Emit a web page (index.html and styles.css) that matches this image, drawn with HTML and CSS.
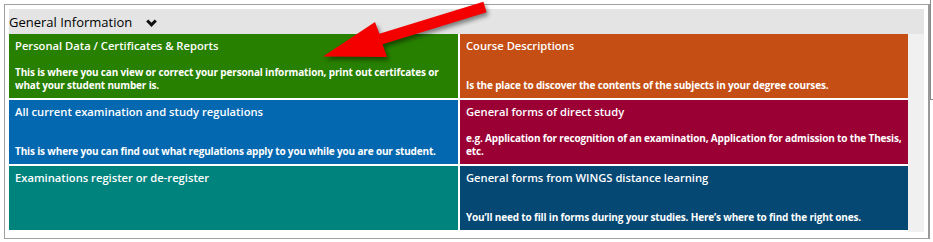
FILE: index.html
```html
<!DOCTYPE html>
<html lang="en">
<head>
    <meta charset="UTF-8">
    <title>General Information</title>
    <link rel="stylesheet" href="styles.css">
</head>
<body>

    <!-- Info Panel -->
    <div class="info-panel">
        <div class="panel-header">
            <span>General Information</span>
            <svg class="caret" width="11" height="8" viewBox="0 0 11 8">
                <path d="M1.2 1.5 L5.5 5.8 L9.8 1.5" fill="none" stroke="#111" stroke-width="3" />
            </svg>
        </div>

        <div class="panel-body">
            <div class="tile-grid">
                <a class="tile green">
                    <div class="tile-title">Personal Data / Certificates &amp; Reports</div>
                    <div class="tile-text">This is where you can view or correct your personal information, print out certifcates or what your student number is.</div>
                </a>
                <a class="tile orange">
                    <div class="tile-title">Course Descriptions</div>
                    <div class="tile-text">Is the place to discover the contents of the subjects in your degree courses.</div>
                </a>
                <a class="tile blue">
                    <div class="tile-title">All current examination and study regulations</div>
                    <div class="tile-text">This is where you can find out what regulations apply to you while you are our student.</div>
                </a>
                <a class="tile crimson">
                    <div class="tile-title">General forms of direct study</div>
                    <div class="tile-text">e.g. Application for recognition of an examination, Application for admission to the Thesis, etc.</div>
                </a>
                <a class="tile teal">
                    <div class="tile-title">Examinations register or de-register</div>
                </a>
                <a class="tile navy">
                    <div class="tile-title">General forms from WINGS distance learning</div>
                    <div class="tile-text">You’ll need to fill in forms during your studies. Here’s where to find the right ones.</div>
                </a>
            </div>
            <div class="scroll-track"></div>
        </div>
    </div>

    <!-- edge of the window behind -->
    <div class="back-window"></div>

    <!-- Red pointer arrow -->
    <svg class="pointer-arrow" width="933" height="242" viewBox="0 0 933 242">
        <polygon fill="#f40000"
            points="483.4,1.7 486.6,12.3 382.6,44.3 387,57 323,56.5 375,22 379.4,33.7" />
    </svg>

</body>
</html>
```

FILE: styles.css
```css
/* Basic Reset */
* {
    margin: 0;
    padding: 0;
    box-sizing: border-box;
}

body {
    font-family: 'Open Sans', sans-serif;
    background-color: #fff;
    width: 933px;
    height: 242px;
    overflow: hidden;
    position: relative;
}

/* Panel */
.info-panel {
    margin: 4px;
    width: 926px;
    height: 235px;
    padding: 4px;
    border: 1px solid #a0a0a0;
    border-right: 2px solid #999;
    background-color: #fff;
}

.panel-header {
    display: flex;
    align-items: center;
    gap: 14px;
    height: 25px;
    padding-top: 1px;
    background-color: #e4e4e4;
    font-size: 13px;
    font-weight: 500;
    color: #000;
}

.caret {
    margin-top: 1px;
}

.panel-body {
    display: flex;
    background-color: #fff;
}

.scroll-track {
    width: 16px;
    height: 198px;
    background-color: #f0f0f0;
}

/* Tiles */
.tile-grid {
    flex: 1;
    display: grid;
    grid-template-columns: 449px 448px;
    grid-auto-rows: 64px;
    gap: 2px;
    background-color: #fff;
}

.tile {
    display: flex;
    flex-direction: column;
    justify-content: space-between;
    padding: 4px 2px 6px 6px;
    color: #fff;
    text-decoration: none;
}

.tile-title {
    font-size: 11.2px;
    font-weight: 600;
    line-height: 16px;
}

.tile-text {
    font-size: 10px;
    font-weight: 700;
    line-height: 13px;
    letter-spacing: -0.16px;
}

.green   { background-color: #288000; }
.orange  { background-color: #c44e14; }
.blue    { background-color: #0468b1; }
.crimson { background-color: #9b0035; }
.teal    { background-color: #00827d; }
.navy    { background-color: #044873; }

/* Overlays */
.back-window {
    position: absolute;
    left: 930px;
    top: -1px;
    width: 10px;
    height: 101px;
    border: 1px solid #8a8a8a;
}

.pointer-arrow {
    position: absolute;
    left: 0;
    top: 0;
    pointer-events: none;
    filter: drop-shadow(2px 3px 2px rgba(0, 0, 0, 0.45));
}
```
